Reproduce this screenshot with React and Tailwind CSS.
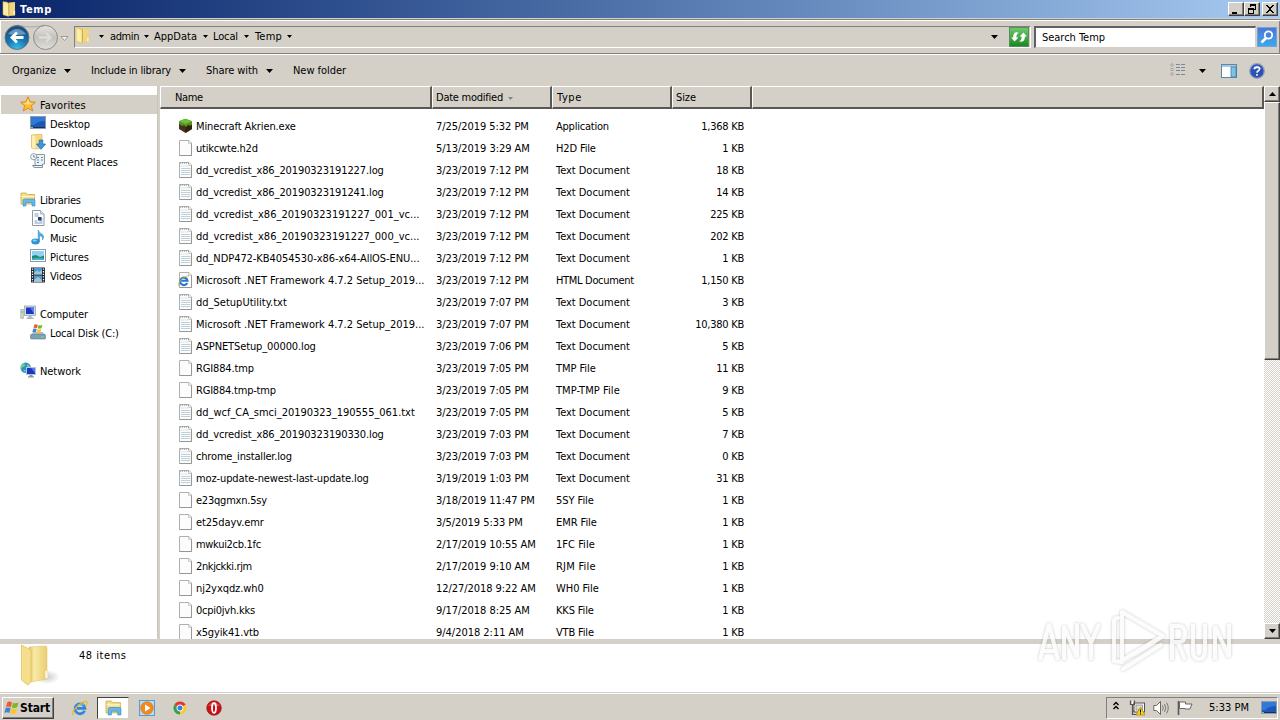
import { useLayoutEffect, useRef, useState } from "react";

/* Advance widths of the 11px interface font, grouped by pixel width. */
const GLYPHS = {
  2: "il",
  3: " .,j",
  4: "frtI/:-()",
  5: "ckszLJ",
  8: "mwMOQ",
  7: "ACDGHNRU",
  10: "W",
};
const advance = (ch) => {
  for (const w in GLYPHS) if (GLYPHS[w].includes(ch)) return Number(w);
  return 6;
};

/* Text whose tracking is tuned so that it occupies its nominal width. */
function T({ children, w, className = "" }) {
  const ref = useRef(null);
  const [gap, setGap] = useState(0);
  const text = String(children);
  const target = w ?? [...text].reduce((n, c) => n + advance(c), 0) + 0.8;
  useLayoutEffect(() => {
    const natural = ref.current.getBoundingClientRect().width - gap * text.length;
    setGap((target - natural) / text.length);
  }, [text, target]);
  return (
    <span ref={ref} className={"whitespace-pre shrink-0 " + className} style={{ letterSpacing: gap + "px" }}>
      {text}
    </span>
  );
}

const Svg = ({ children, s = 16, className = "", vb = "0 0 16 16" }) => (
  <svg width={s} height={s} viewBox={vb} className={"shrink-0 " + className}>{children}</svg>
);

const Folder = ({ s = 16, className }) => (
  <Svg s={s} className={className}>
    <path d="M2 1.5 L5 0.5 L8 2 L14 1 V14 L8 15 L2 14 Z" fill="#e9c95c" />
    <path d="M8 1.5 H14 V14.5 H8 Z" fill="#f0d67c" />
    <path d="M2 .5 L7.5 2.500 V15.5 L2 13.5 Z" fill="#fbedaa" stroke="#dbb64c" strokeWidth=".5" />
    <path d="M8 2v12.500" stroke="#c9a640" strokeWidth=".7" />
    <path d="M12 9.500 h2 v4.500 h-2z" fill="#fff8dc" stroke="#d5b75c" strokeWidth=".4" />
  </Svg>
);
const Libs = ({ s = 16 }) => (
  <Svg s={s}>
    <path d="M1 2 H6 L7.5 3.5 H14.5 V13 H1 Z" fill="#f5e08a" stroke="#c9a545" strokeWidth=".8" />
    <path d="M1.5 5.5 H14.5" stroke="#fff8d0" />
    <path d="M3 15 V9.5 Q3 8 4.5 8 H13 Q15 8 15 9.5 V15 H12 V11.5 H6 V15 Z" fill="#64b9ea" stroke="#3a86bd" strokeWidth=".6" />
  </Svg>
);
const Star = () => (
  <Svg>
    <path d="M8 .8 L10.1 5.7 L15.4 6.2 L11.4 9.7 L12.7 15 L8 12.1 L3.3 15 L4.6 9.7 L.6 6.2 L5.9 5.7 Z" fill="#ffbf35" stroke="#e08a1c" strokeWidth="1" />
    <path d="M8 3 L9.4 6.8 L12.5 7 L8 8.8 L4 7 L6.7 6.6Z" fill="#ffe48a" />
  </Svg>
);
const Desktop = () => (
  <Svg>
    <rect x=".5" y="1.5" width="15" height="12" fill="#1f57b8" stroke="#8c9bb0" />
    <path d="M1 2 H15 V6 Q8 6 4 10 L1 10Z" fill="#3279d6" />
    <path d="M1 12.5 H15" stroke="#16324f" /><path d="M1 12.5h2" stroke="#6fd16b" />
  </Svg>
);
const Downloads = () => (
  <Svg>
    <path d="M1.5 1 L6 .5 H12 V14 L6 15 L1.5 14 Z" fill="#f3da80" stroke="#d3b04a" strokeWidth=".6" />
    <path d="M2 1.2 L5.5 2.8 V14.8 L2 13.5Z" fill="#fdf0b5" />
    <path d="M9.2 6 H12.8 V10 H15.6 L11 15.3 L6.4 10 H9.2 Z" fill="#3d94e0" stroke="#1f65ad" strokeWidth=".7" />
  </Svg>
);
const Recent = () => (
  <Svg>
    <path d="M5 1.5 H14.5 V11 H12.5 V14.5 H4 L2.5 12.5 H5 Z" fill="#eef2f5" stroke="#8b97a3" />
    <path d="M7 4.500 h2 M11 4.500h2 M7 7h2 M11 7h2 M7 9.500h2 M3 12.5 H12" stroke="#5f87a8" />
    <circle cx="3.700" cy="3.700" r="3.1" fill="#f8fafb" stroke="#93a0ac" /><path d="M3.700 2 V4 H5.500" fill="none" stroke="#557" strokeWidth=".7" />
  </Svg>
);
const Doc = () => (
  <Svg>
    <path d="M2.5 .5 H10.5 L14 4 V15.5 H2.5 Z" fill="#fff" stroke="#8b9aaa" />
    <path d="M10.5 .5 V4 H14" fill="#dbe5ee" stroke="#8b9aaa" strokeWidth=".7" />
    <path d="M4.5 4h4M4.5 6h4M9.5 11h3M4.5 11h3M4.5 13h8M9.5 9h3" stroke="#6f93bb" strokeWidth=".9" /><rect x="8" y="7" width="3.500" height="3.5" fill="#263f79" />
  </Svg>
);
const Music = () => (
  <Svg>
    <path d="M8.2 13 V1 Q9 4 12 5 Q15 7 12.5 11 Q13.5 7.5 9.5 6.5 V12.5" fill="#4cb2e8" stroke="#2c82bf" strokeWidth=".5" />
    <ellipse cx="5.5" cy="12.4" rx="4.2" ry="3" fill="#2a94d8" /><ellipse cx="4.7" cy="11.6" rx="2" ry="1" fill="#8fd6f6" />
  </Svg>
);
const Pictures = () => (
  <Svg>
    <rect x=".5" y="1.5" width="15" height="12" fill="#fff" stroke="#8c98a5" />
    <rect x="2" y="3" width="12" height="9" fill="#8fd3f2" />
    <path d="M2 8 L6 7 L10 9 L14 7.5 V12 H2Z" fill="#27866f" /><path d="M2 10.5 Q8 9 14 10.5 V12 H2Z" fill="#3eb0d0" />
  </Svg>
);
const Videos = () => (
  <Svg>
    <rect x="1" y=".5" width="14" height="15" fill="#1d2630" />
    <rect x="4" y="1" width="8" height="6.5" fill="#4f9cd4" /><rect x="4" y="8.5" width="8" height="6.5" fill="#4f9cd4" />
    <path d="M4 6 L7 3.5 L9 5 L12 3 V7.5 H4Z M4 13 L8 10 L12 13 V15 H4Z" fill="#a7c5c9" />
    <path d="M2.5 1.5 V15 M13.5 1.5 V15" stroke="#fff" strokeWidth="1.3" strokeDasharray="1.3 1.3" />
  </Svg>
);
const Computer = () => (
  <Svg>
    <rect x=".8" y="4.5" width="2.600" height="9" fill="#cbd3c8" stroke="#9aa69a" strokeWidth=".6" /><path d="M1.300 7h1.5" stroke="#4b5" />
    <rect x="4.5" y="1" width="11" height="9.500" fill="#d4dae2" stroke="#9aa5b2" strokeWidth=".8" />
    <rect x="6" y="2.500" width="8" height="6.500" fill="#1a35c0" /><path d="M10 2.500 H14 V9Z" fill="#5579ea" />
    <path d="M8.5 10.5h3v2h2v1.5h-7v-1.5h2z" fill="#aab4be" />
  </Svg>
);
const FlagShapes = () => (
  <>
    <path d="M3.5 2 Q5.5 1 8 2.4 L6.8 7.2 Q4.5 6 2 7Z" fill="#ee5a27" />
    <path d="M9 2.8 Q11.5 4 14.5 2.6 L13.2 7.3 Q10.5 8.6 7.8 7.4Z" fill="#79b82b" />
    <path d="M1.7 8 Q4.3 7 6.6 8.2 L5.3 13 Q3 11.8 .4 12.9Z" fill="#3f83d6" />
    <path d="M7.6 8.6 Q10 9.6 12.9 8.4 L11.6 13.2 Q9 14.5 6.3 13.3Z" fill="#fbc523" />
  </>
);
const Disk = () => (
  <Svg>
    <path d="M3.5 8 H12.5 L15.5 11 H.5Z" fill="#a9b9c4" /><rect x=".5" y="10.5" width="15" height="4.5" rx=".8" fill="#7ba0b5" stroke="#6b8799" strokeWidth=".7" />
    <path d="M11 13h3" stroke="#7be86c" />
    <g transform="translate(2 -1) scale(.72)"><FlagShapes /></g>
  </Svg>
);
const Network = () => (
  <Svg>
    <circle cx="5.7" cy="5.7" r="5.2" fill="#2d8fc4" /><path d="M3 1.5 Q6 2 5 4 Q2 5 1 7 Q0 4 3 1.5 M7 2 Q10 3 10 6 L7 6Z M3 8 L6 8 L5 10.5Z" fill="#6fd08a" />
    <rect x="6.5" y="5.5" width="9" height="7" fill="#1a35c0" stroke="#b9c4d2" /><path d="M11 6H15V11Z" fill="#5579ea" /><path d="M9.5 13h3v1.2h1.5v1.3h-6v-1.3h1.5z" fill="#8995a3" />
  </Svg>
);
const Ie = ({ s = 16 }) => (
  <Svg s={s}>
    <path d="M12.6 10.8 A5 5 0 1 1 13 8.3 H5" fill="none" stroke="#2f86dc" strokeWidth="2.700" />
    <path d="M5 5.500 Q8 2.500 12 5" fill="none" stroke="#7cc0f5" strokeWidth=".8" />
    <path d="M1.500 14.800 Q-1 12 5.5 6.3 Q12 .3 14.8 1.500 Q16 3 13.500 6" fill="none" stroke="#efb71e" strokeWidth="1.200" />
  </Svg>
);
const Page = ({ kind }) => (
  <Svg className="-mt-px">
    {kind === "exe" ? (
      <>
        <path d="M7.500 1 L14 3.500 V11 L7.500 15 L1 11 V3.5Z" fill="#4c2f1b" />
        <path d="M7.500 7 L14 4 V11 L7.500 15Z" fill="#33200f" />
        <path d="M7.500 .8 L14 3.3 V6.500 L12 8 L10.5 6.8 L8 9 L6 7.300 L4 8 L1 6 V3.3Z" fill="#4f9420" /><path d="M7.500 .8 L14 3.3 L7.500 6 L1 3.3Z" fill="#72bd38" />
      </>
    ) : (
      <>
        <path d="M1.5 .5 H11 L13.500 3 V15.5 H1.5 Z" fill="#fcfcfc" stroke="#b0b0b0" />
        <path d="M13.500 3.500 V15.500 H1.500" fill="none" stroke="#979797" />
        <path d="M10.5 1 V3.500 H13.500" fill="#eee" stroke="#bdbdbd" strokeWidth=".7" />
      </>
    )}
    {kind === "txt" && (
      <>
        <path d="M3 6.5h9.500M3 8.5h9.500M3 10.5h9.500M3 12.5h9.500" stroke="#bdd0dc" />
        <path d="M2 1 H11" stroke="#9a9fa2" strokeWidth="1.6" strokeDasharray="1 1" /><path d="M2 4h9" stroke="#dfe3e6" />
      </>
    )}
    {kind === "html" && (
      <>
        <path d="M9.200 11 A3.7 3.7 0 1 1 9.500 8.700 H3.500" fill="none" stroke="#2479d6" strokeWidth="2.1" />
        <path d="M.8 14 Q-.8 11.500 4 7 Q9 3 11 4.2" fill="none" stroke="#e3b62a" strokeWidth=".9" />
      </>
    )}
  </Svg>
);

const Tri = ({ className = "", small, color = "#000" }) => (
  <svg width={small ? 5 : 7} height={small ? 3 : 4} viewBox="0 0 7 4" preserveAspectRatio="none" className={"shrink-0 " + className}><path d="M0 0H7L3.5 4Z" fill={color} /></svg>
);

const NAV = [
  [Star, "Favorites", 0], [Desktop, "Desktop", 1], [Downloads, "Downloads", 1], [Recent, "Recent Places", 1], null,
  [Libs, "Libraries", 0], [Doc, "Documents", 1], [Music, "Music", 1], [Pictures, "Pictures", 1], [Videos, "Videos", 1], null,
  [Computer, "Computer", 0], [Disk, "Local Disk (C:)", 1], null, [Network, "Network", 0],
];

const TD = "Text Document";
const FILES = [
  ["exe", "Minecraft Akrien.exe", "7/25/2019 5:32 PM", "Application", "1,368 KB"],
  ["file", "utikcwte.h2d", "5/13/2019 3:29 AM", "H2D File", "1 KB"],
  ["txt", "dd_vcredist_x86_20190323191227.log", "3/23/2019 7:12 PM", TD, "18 KB"],
  ["txt", "dd_vcredist_x86_20190323191241.log", "3/23/2019 7:12 PM", TD, "14 KB"],
  ["txt", "dd_vcredist_x86_20190323191227_001_vc...", "3/23/2019 7:12 PM", TD, "225 KB", 223.5],
  ["txt", "dd_vcredist_x86_20190323191227_000_vc...", "3/23/2019 7:12 PM", TD, "202 KB", 223.5],
  ["txt", "dd_NDP472-KB4054530-x86-x64-AllOS-ENU...", "3/23/2019 7:12 PM", TD, "1 KB", 223.5],
  ["html", "Microsoft .NET Framework 4.7.2 Setup_2019...", "3/23/2019 7:12 PM", "HTML Document", "1,150 KB", 228.5],
  ["txt", "dd_SetupUtility.txt", "3/23/2019 7:07 PM", TD, "3 KB"],
  ["txt", "Microsoft .NET Framework 4.7.2 Setup_2019...", "3/23/2019 7:07 PM", TD, "10,380 KB", 228.5],
  ["txt", "ASPNETSetup_00000.log", "3/23/2019 7:06 PM", TD, "5 KB"],
  ["file", "RGI884.tmp", "3/23/2019 7:05 PM", "TMP File", "11 KB"],
  ["file", "RGI884.tmp-tmp", "3/23/2019 7:05 PM", "TMP-TMP File", "9 KB"],
  ["txt", "dd_wcf_CA_smci_20190323_190555_061.txt", "3/23/2019 7:05 PM", TD, "5 KB"],
  ["txt", "dd_vcredist_x86_20190323190330.log", "3/23/2019 7:03 PM", TD, "7 KB"],
  ["txt", "chrome_installer.log", "3/23/2019 7:03 PM", TD, "0 KB"],
  ["txt", "moz-update-newest-last-update.log", "3/19/2019 1:03 PM", TD, "31 KB"],
  ["file", "e23qgmxn.5sy", "3/18/2019 11:47 PM", "5SY File", "1 KB"],
  ["file", "et25dayv.emr", "3/5/2019 5:33 PM", "EMR File", "1 KB"],
  ["file", "mwkui2cb.1fc", "2/17/2019 10:55 AM", "1FC File", "1 KB"],
  ["file", "2nkjckki.rjm", "2/17/2019 9:10 AM", "RJM File", "1 KB"],
  ["file", "nj2yxqdz.wh0", "12/27/2018 9:22 AM", "WH0 File", "1 KB"],
  ["file", "0cpi0jvh.kks", "9/17/2018 8:25 AM", "KKS File", "1 KB"],
  ["file", "x5gyik41.vtb", "9/4/2018 2:11 AM", "VTB File", "1 KB"],
];

const RAISED = "bg-[#d4d0c8] border border-t-white border-l-white border-b-[#404040] border-r-[#404040] shadow-[inset_-1px_-1px_0_#808080]";

const WinBtn = ({ children, className = "" }) => (
  <div className={"w-4 h-[14px] flex items-center justify-center " + RAISED + " " + className}>
    <svg width="12" height="11" viewBox="0 0 12 11" shapeRendering="crispEdges">{children}</svg>
  </div>
);

const Head = ({ children, className }) => (
  <div className={"h-[23px] flex items-center pt-[2px] border-t border-l border-t-white border-l-white border-b-2 border-b-[#5a5854] border-r-2 border-r-[#5a5854] bg-[#d4d0c8] " + className}>{children}</div>
);

function TitleBar() {
  return (
    <div className="h-[18px] shrink-0 flex items-center pl-px pr-[2px] bg-linear-to-r from-[#0a246a] to-[#a6caf0]">
      <Folder />
      <T w={32} className="ml-[3px] pt-[2px] text-white font-bold">Temp</T>
      <div className="flex-1" />
      <WinBtn><path d="M2 8h5v2H2z" /></WinBtn>
      <WinBtn><path d="M4 0h6v6H8V5h1V2H5v1H4zM2 4h6v6H2zM3 6v3h4V6z" fillRule="evenodd" /></WinBtn>
      <WinBtn className="ml-[2px]"><path d="M2 1h2v1h1v1h2V2h1V1h2v1H9v1H8v1H7v2h1v1h1v1h1v1H8V8H7V7H5v1H4v1H2V8h1V7h1V6h1V4H4V3H3V2H2z" /></WinBtn>
    </div>
  );
}

function NavBar() {
  return (
    <div className="h-[35px] shrink-0 flex items-center pl-[4px] pr-px border-y border-[#808080] shadow-[inset_1px_1px_0_#fff,inset_-1px_0_0_#808080]">
      <svg width="66" height="28" viewBox="0 0 66 28" className="shrink-0">
        <defs>
          <radialGradient id="bk" cx=".5" cy="1" r=".9"><stop offset="0" stopColor="#38c6ee" /><stop offset=".5" stopColor="#1877b4" /><stop offset="1" stopColor="#1d4d80" /></radialGradient>
          <linearGradient id="fw" x1="0" y1="0" x2="0" y2="1"><stop offset="0" stopColor="#e6e5e2" /><stop offset=".5" stopColor="#c3c1bc" /><stop offset="1" stopColor="#e2e0dc" /></linearGradient>
        </defs>
        <path d="M13 2 Q27 6 41 2" stroke="#a5aab0" fill="none" />
        <circle cx="13" cy="14.500" r="12" fill="url(#bk)" stroke="#64788c" strokeWidth="1" />
        <path d="M4 11 Q13 1 22 11 Q13 13 4 11Z" fill="#a7c8de" opacity=".55" />
        <path d="M19.5 14.500 H9 M13 9.500 L8 14.500 L13 19.500" stroke="#fff" strokeWidth="2.8" fill="none" />
        <circle cx="41.500" cy="14.500" r="12" fill="url(#fw)" stroke="#8e8d8a" strokeWidth="1" />
        <path d="M35 14.500 H46 M42 10 L46.500 14.500 L42 19" stroke="#dedcd8" strokeWidth="2.400" fill="none" />
        <path d="M57 13.500 H64 L60.500 17.500Z" fill="#f4f3f1" stroke="#8b8984" strokeWidth=".8" />
      </svg>
      <div className="ml-[4px] h-[22px] flex-1 flex items-center border border-t-[#808080] border-l-[#808080] border-b-white border-r-white">
        <Folder s={17} className="-mt-[2px] -ml-px" />
        <Tri small className="ml-[8px]" />
        <T w={29} className="ml-[6px]">admin</T>
        <Tri small className="ml-[5px]" />
        <T w={43} className="ml-[5px]">AppData</T>
        <Tri small className="ml-[6px]" />
        <T w={25} className="ml-[5px]">Local</T>
        <Tri small className="ml-[6px]" />
        <T w={27} className="ml-[6px]">Temp</T>
        <Tri small className="ml-[5px]" />
        <div className="flex-1" />
        <Tri className="mr-[11px]" />
        <div className="w-5 h-5 mr-px border border-[#5d8d5e] flex items-center justify-center bg-linear-to-b from-[#6cc96a] to-[#148a22]">
          <Svg s={18}><path d="M1 8.500 L4 12 L7.500 8.500 H5.700 Q5.500 5 8 4.300 Q3 2.500 2.700 8.500Z M8.500 7.500 L12 4 L15 7.500 H13.300 Q13 13.500 8 11.700 Q10.500 11 10.300 7.500Z" fill="#fff" /></Svg>
        </div>
      </div>
      <div className="ml-[3px] w-[222px] h-[22px] flex items-center pl-[6px] bg-white border-t-2 border-l-2 border-t-[#606060] border-l-[#606060] border-b border-r border-b-[#d4d0c8] border-r-[#d4d0c8]">
        <T w={63} className="pt-px">Search Temp</T>
      </div>
      <div className="w-5 h-5 ml-px mr-[2px] border border-[#7ba0d8] bg-linear-to-b from-[#4b76da] to-[#38a9ea] flex items-center justify-center">
        <Svg><path d="M7 9 L2.500 13.500" stroke="#fff" strokeWidth="2.600" /><circle cx="9.500" cy="6" r="3.700" fill="#4a83dd" stroke="#fff" strokeWidth="1.800" /></Svg>
      </div>
    </div>
  );
}

function Toolbar() {
  return (
    <div className="h-[33px] shrink-0 flex items-center pl-[12px] pr-[15px] border-t border-t-white">
      <T w={44}>Organize</T><Tri className="ml-[8px]" />
      <T w={80} className="ml-[20px]">Include in library</T><Tri className="ml-[8px]" />
      <T w={52} className="ml-[20px]">Share with</T><Tri className="ml-[8px]" />
      <T w={53} className="ml-[20px]">New folder</T>
      <div className="flex-1" />
      <Svg className="-mt-[2px]">
        <path d="M1 2h2v2h-2zM1 6.500h2v2h-2zM1 11h2v2h-2z" fill="#fff" stroke="#9a9a96" strokeWidth=".9" />
        <path d="M6 2.500h4M11 2.500h4M6 5.500h4M11 5.500h4M6 8.500h4M11 8.500h4M6 12.500h4M11 12.500h4" stroke="#7c879a" />
      </Svg>
      <Tri className="ml-[13px]" />
      <Svg className="ml-[15px] -mt-px">
        <rect x=".5" y="1.500" width="15" height="13" fill="#fff" stroke="#5b87ad" /><path d="M1 3h14" stroke="#8ab4d4" strokeWidth="1.500" />
        <rect x="10" y="4" width="5" height="10" fill="#7cc4e2" stroke="#3f7da8" strokeWidth=".8" />
      </Svg>
      <svg width="16" height="16" viewBox="0 0 16 16" className="ml-[12px] shrink-0 -mt-px">
        <circle cx="8" cy="8" r="7.300" fill="#2b50b8" stroke="#93a0bd" strokeWidth="1.300" />
        <path d="M3 6 Q8 -1 13 6Z" fill="#7f9fe4" opacity=".7" />
        <path d="M5.500 6.300 Q5.500 4 8 4 Q10.500 4 10.500 6 Q10.500 7.200 9 8 Q8 8.600 8 9.800 M8 11v1.700" fill="none" stroke="#fff" strokeWidth="1.600" />
      </svg>
    </div>
  );
}

function Sidebar() {
  return (
    <div className="w-[157px] shrink-0 bg-white pt-[9px]">
      {NAV.map((n, i) => {
        if (!n) return <div key={i} className="h-[19px]" />;
        const [Icon, label, depth] = n;
        return (
          <div key={i} className={"h-[19px] ml-px flex items-center " + (depth ? "pl-[29px] " : "pl-[19px] ") + (i === 0 ? "bg-[#d4d0c8]" : "")}>
            <div className="-mt-px"><Icon /></div>
            <T className="ml-[4px] pt-[2px]">{label}</T>
          </div>
        );
      })}
    </div>
  );
}

function FileList() {
  return (
    <div className="flex-1 flex flex-col bg-white overflow-hidden">
      <div className="flex shrink-0">
        <Head className="w-[272px] pl-[14px]"><T>Name</T></Head>
        <Head className="w-[120px] pl-[3px]"><T w={67}>Date modified</T><Tri small color="#88857f" className="ml-[5px] mt-px" /></Head>
        <Head className="w-[120px] pl-[4px]"><T>Type</T></Head>
        <Head className="w-[80px] pl-[3px]"><T w={20}>Size</T></Head>
        <Head className="flex-1" />
      </div>
      <div className="pt-[6px]">
        {FILES.map(([kind, name, date, type, size, width], i) => (
          <div key={i} className="h-[22px] flex items-center">
            <div className="w-[276px] pl-[18px] flex items-center"><Page kind={kind} /><T w={width} className="ml-[2px] pt-[2px]">{name}</T></div>
            <div className="w-[120px] flex"><T className="pt-[2px]">{date}</T></div>
            <div className="w-[120px] flex"><T className="pt-[2px]">{type}</T></div>
            <div className="w-[68px] flex justify-end"><T className="pt-[2px]">{size}</T></div>
          </div>
        ))}
      </div>
    </div>
  );
}

function ScrollBar() {
  return (
    <div className="w-4 shrink-0 flex flex-col bg-[conic-gradient(#d4d0c8_25%,#fff_0_50%,#d4d0c8_0_75%,#fff_0)] bg-[length:2px_2px]">
      <div className={"h-4 flex items-center justify-center " + RAISED}><Tri className="rotate-180" /></div>
      <div className={"h-[258px] " + RAISED} />
      <div className="flex-1" />
      <div className={"h-4 flex items-center justify-center " + RAISED}><Tri /></div>
    </div>
  );
}

function Details() {
  return (
    <div className="h-[48px] shrink-0 flex items-start bg-white pl-[18px]">
      <svg width="42" height="44" viewBox="0 0 42 44" className="shrink-0">
        <defs><linearGradient id="fl" x1="0" x2="1"><stop offset="0" stopColor="#e3c468" /><stop offset=".3" stopColor="#f9eaa6" /><stop offset="1" stopColor="#e9cd72" /></linearGradient><radialGradient id="sh"><stop offset="0" stopColor="#999" stopOpacity=".5" /><stop offset="1" stopColor="#999" stopOpacity="0" /></radialGradient></defs>
        <ellipse cx="29" cy="33" rx="13" ry="7" fill="url(#sh)" />
        <path d="M11 3 L27 2 Q29 2 29 4 V35 L13 38 Z" fill="url(#fl)" stroke="#e2c66c" strokeWidth=".6" />
        <path d="M3.500 1 L11 5 Q13 6 13 8 V34 Q13 40 9.500 41 L3.500 36 Z" fill="#f5df8d" stroke="#dcbc5c" strokeWidth=".7" />
        <path d="M27 27 Q30 25 30 29 V34 L27 35Z" fill="#fdf8e2" stroke="#d9c483" strokeWidth=".5" />
      </svg>
      <T w={47.5} className="ml-[19px] mt-[5px]">48 items</T>
    </div>
  );
}

function Taskbar() {
  return (
    <div className="h-[28px] shrink-0 flex items-center border-t border-t-[#d4d0c8] shadow-[inset_0_1px_0_#fff] pl-[2px] pr-[2px] pt-[2px]">
      <div className={"w-[52px] h-[22px] flex items-center pl-px " + RAISED}>
        <Svg><FlagShapes /></Svg><T w={30} className="font-bold pt-px text-[12px]">Start</T>
      </div>
      <div className="ml-[18px] flex"><Ie /></div>
      <div className="ml-[9px] w-[32px] h-[22px] bg-white border border-t-[#404040] border-l-[#404040] border-b-[#d4d0c8] border-r-[#d4d0c8] flex items-center justify-center"><Libs s={17} /></div>
      <Svg className="ml-[10px]">
        <rect x=".5" y=".5" width="15" height="15" fill="#b9dcf5" stroke="#5a9bd3" /><circle cx="8" cy="8" r="6.300" fill="#f58a1c" stroke="#d56e0c" strokeWidth=".6" /><path d="M6 4.500 L11.500 8 L6 11.500Z" fill="#fff" />
      </Svg>
      <Svg className="ml-[17px]">
        <path d="M8 8 L2.370 4.750 A6.500 6.500 0 0 1 13.630 4.750 Z" fill="#e0382d" />
        <path d="M8 8 L13.630 4.750 A6.500 6.500 0 0 1 8 14.500 Z" fill="#f9cb2e" />
        <path d="M8 8 L8 14.500 A6.500 6.500 0 0 1 2.370 4.750 Z" fill="#35a04c" />
        <circle cx="8" cy="8" r="3.100" fill="#3c7de6" stroke="#fff" strokeWidth="1" />
      </Svg>
      <Svg className="ml-[18px]">
        <circle cx="8" cy="8" r="7.300" fill="#c91218" stroke="#8e0b10" strokeWidth=".6" /><path d="M2 6 Q8 -2 14 6Z" fill="#ee6a6a" opacity=".6" /><ellipse cx="8" cy="8" rx="2" ry="4.800" fill="none" stroke="#fff" strokeWidth="1.800" />
      </Svg>
      <div className="flex-1" />
      <div className="h-[22px] w-[172px] flex items-center pl-[6px] border border-t-[#808080] border-l-[#808080] border-b-white border-r-white">
        <svg width="6" height="9" viewBox="0 0 6 9" className="mb-[4px]"><path d="M.5 4 L3 1.500 L5.500 4 M.5 8 L3 5.500 L5.500 8" fill="none" stroke="#000" strokeWidth="1.400" /></svg>
        <Svg className="ml-[10px]">
          <rect x="5" y="3" width="10.500" height="9" fill="#fff" stroke="#55534f" /><rect x="7" y="5" width="6.500" height="5" fill="#dedbd4" stroke="#777" strokeWidth=".7" />
          <path d="M1.500 .5v4h4v-4M3.500 4.500v10h5M3.500 11h2" fill="none" stroke="#55534f" strokeWidth="1.200" /><path d="M3.500 1v3" stroke="#fff" />
          <path d="M11.500 7 L16 15 H7Z" fill="#f8d31c" stroke="#a88407" strokeWidth=".7" /><path d="M11.500 9.500v3M11.500 13.300v1" stroke="#000" />
        </Svg>
        <Svg className="ml-[8px]">
          <path d="M.8 5.500 H3.500 L7.500 1.500 V14.500 L3.500 10.500 H.8Z" fill="#fff" stroke="#5b5954" strokeWidth=".9" />
          <path d="M9.500 5.500 Q11 8 9.500 10.500 M11.500 4 Q14 8 11.500 12 M13.500 2.500 Q17 8 13.500 13.500" fill="none" stroke="#74726c" strokeWidth=".9" />
        </Svg>
        <Svg className="ml-[8px]">
          <path d="M1.500 1v14" stroke="#5b5954" strokeWidth="1.600" /><path d="M2.500 2 H8.500 V4 H15 L13 9 H8 V8.500 H2.500Z" fill="#fff" stroke="#5b5954" strokeWidth=".9" />
        </Svg>
        <T w={40} className="ml-[16px]">5:33 PM</T>
        <div className="ml-[12px] flex"><Desktop /></div>
      </div>
    </div>
  );
}

function Watermark() {
  return (
    <svg width="204" height="76" viewBox="0 0 204 76" className="absolute left-[1034px] top-[602px]">
      <defs><filter id="ds" x="-10%" y="-10%" width="120%" height="120%"><feDropShadow dx="0" dy="0" stdDeviation="1.700" floodColor="#777" floodOpacity=".5" /></filter></defs>
      <g filter="url(#ds)" opacity=".85" fill="none" stroke="#fcfcfc" strokeWidth="4">
        <path d="M6 58 L15 22 L24 58 M9 49 H21 M30 58 V24 L43 55 V21 M48 22 L57 41 L65 22 M57 41 V58" />
        <path d="M138 58 V24 H145 Q151 24 151 32 Q151 40 145 40 H138 M144 40 L151 58 M159 22 V49 Q159 57 165 57 Q171 57 171 49 V22 M181 58 V24 L195 55 V22" />
        <path d="M88 58 V10 L129 34 L99 53" strokeLinejoin="round" />
        <path d="M84 16 Q80 16 80 20 V59 L88 60 M89 67 L127 43 M89 58 L120 39" strokeLinecap="round" strokeLinejoin="round" />
      </g>
    </svg>
  );
}

export default function App() {
  return (
    <div className="relative w-[1280px] h-[720px] overflow-hidden flex flex-col bg-[#d4d0c8] text-black text-[11px] leading-[14px] [font-family:'DejaVu_Sans_Condensed','DejaVu_Sans',sans-serif] [font-stretch:condensed]">
      <TitleBar />
      <div className="h-px shrink-0" />
      <NavBar />
      <Toolbar />
      <div className="h-[553px] shrink-0 flex -mt-px">
        <Sidebar />
        <div className="w-[3px] shrink-0 border-l border-l-[#c8c5bd]" />
        <FileList />
        <ScrollBar />
      </div>
      <div className="h-[5px] shrink-0" />
      <Details />
      <Taskbar />
      <Watermark />
    </div>
  );
}
